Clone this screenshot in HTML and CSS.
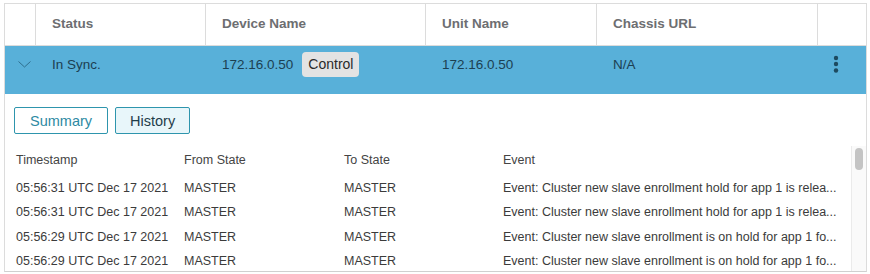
FILE: index.html
```html
<!DOCTYPE html>
<html lang="en">
<head>
    <meta charset="UTF-8">
    <meta name="viewport" content="width=device-width, initial-scale=1.0">
    <title>Cluster Units</title>
    <link rel="stylesheet" href="styles.css">
</head>
<body>
    <div class="grid-table">
        <div class="row head">
            <div class="cell"></div>
            <div class="cell">Status</div>
            <div class="cell">Device Name</div>
            <div class="cell">Unit Name</div>
            <div class="cell">Chassis URL</div>
            <div class="cell"></div>
        </div>
        <div class="row selected">
            <div class="cell expander">
                <svg width="13" height="7" viewBox="0 0 13 7"><path d="M0.5 0.5 L6.5 6 L12.5 0.5" fill="none" stroke="#2f6f8e" stroke-width="1"/></svg>
            </div>
            <div class="cell">In Sync.</div>
            <div class="cell">172.16.0.50 <span class="badge">Control</span></div>
            <div class="cell">172.16.0.50</div>
            <div class="cell">N/A</div>
            <div class="cell kebab">
                <svg width="6" height="18" viewBox="0 0 6 18"><circle cx="3" cy="3" r="2.2" fill="#1d4a60"/><circle cx="3" cy="9" r="2.2" fill="#1d4a60"/><circle cx="3" cy="15.5" r="2.2" fill="#1d4a60"/></svg>
            </div>
        </div>
        <div class="panel">
            <div class="tabs">
                <button class="tab">Summary</button>
                <button class="tab active">History</button>
            </div>
            <div class="history">
                <div class="history-body">
                    <div class="hrow hhead">
                        <span>Timestamp</span><span>From State</span><span>To State</span><span>Event</span>
                    </div>
                    <div class="hrow">
                        <span>05:56:31 UTC Dec 17 2021</span><span>MASTER</span><span>MASTER</span><span>Event: Cluster new slave enrollment hold for app 1 is relea...</span>
                    </div>
                    <div class="hrow">
                        <span>05:56:31 UTC Dec 17 2021</span><span>MASTER</span><span>MASTER</span><span>Event: Cluster new slave enrollment hold for app 1 is relea...</span>
                    </div>
                    <div class="hrow">
                        <span>05:56:29 UTC Dec 17 2021</span><span>MASTER</span><span>MASTER</span><span>Event: Cluster new slave enrollment is on hold for app 1 fo...</span>
                    </div>
                    <div class="hrow">
                        <span>05:56:29 UTC Dec 17 2021</span><span>MASTER</span><span>MASTER</span><span>Event: Cluster new slave enrollment is on hold for app 1 fo...</span>
                    </div>
                </div>
                <div class="scrollbar"><div class="thumb"></div></div>
            </div>
        </div>
    </div>
</body>
</html>
```

FILE: styles.css
```css
body {
    margin: 0;
    padding: 3px 3px 0 4px;
    background: #ffffff;
    font-family: "Liberation Sans", Arial, sans-serif;
}
.grid-table {
    border: 1px solid #dcdcdc;
    border-bottom: 1px solid #d0d0d0;
    height: 269px;
    display: flex;
    flex-direction: column;
    box-sizing: border-box;
}
.row {
    display: grid;
    grid-template-columns: 30px 170px 220px 171px 221px 1fr;
}
.head {
    height: 41px;
    border-bottom: 1px solid #dcdcdc;
    font-size: 13.5px;
    font-weight: bold;
    color: #6d6e71;
}
.head .cell {
    border-left: 1px solid #dcdcdc;
    display: flex;
    align-items: center;
    padding-left: 16px;
    padding-bottom: 2px;
}
.head .cell:first-child {
    border-left: none;
}
.selected {
    height: 48px;
    background: #58b0d9;
    font-size: 13.5px;
    color: #1c3f52;
}
.selected .cell {
    display: flex;
    align-items: center;
    height: 36px;
    padding-left: 17px;
}
.selected .expander {
    padding-left: 13px;
}
.badge {
    margin-left: 9px;
    background: #e3e3e3;
    color: #2a2a2a;
    border-radius: 4px;
    padding: 5px 6px;
    line-height: 15px;
    font-size: 14px;
}
.selected .kebab {
    padding-left: 16px;
}
.panel {
    flex: 1;
    display: flex;
    flex-direction: column;
    min-height: 0;
}
.tabs {
    display: flex;
    gap: 7px;
    padding: 13px 0 0 9px;
}
.tab {
    font-family: "Liberation Sans", Arial, sans-serif;
    font-size: 14.5px;
    height: 27px;
    padding: 0 15px;
    border: 1px solid #2e95ad;
    border-radius: 2px;
    background: #ffffff;
    color: #2e8aa3;
}
.tab.active {
    background: #e8f6fa;
    color: #1f3d4a;
    padding: 0 14px;
}
.history {
    flex: 1;
    display: flex;
    margin-top: 12px;
    min-height: 0;
}
.history-body {
    flex: 1;
    overflow: hidden;
    padding-left: 11px;
}
.hrow {
    display: grid;
    grid-template-columns: 168px 160px 159px 1fr;
    height: 24.3px;
    align-items: center;
    font-size: 12.5px;
    color: #3b3b3b;
}
.hrow span {
    white-space: nowrap;
}
.hhead {
    height: 30px;
    padding-bottom: 3px;
    box-sizing: border-box;
    color: #444444;
}
.scrollbar {
    width: 14px;
    border-left: 1px solid #ebebeb;
    background: #fafafa;
}
.thumb {
    margin: 2px 0 0 3px;
    width: 8px;
    height: 22px;
    border-radius: 4px;
    background: #c4c4c4;
}
```
